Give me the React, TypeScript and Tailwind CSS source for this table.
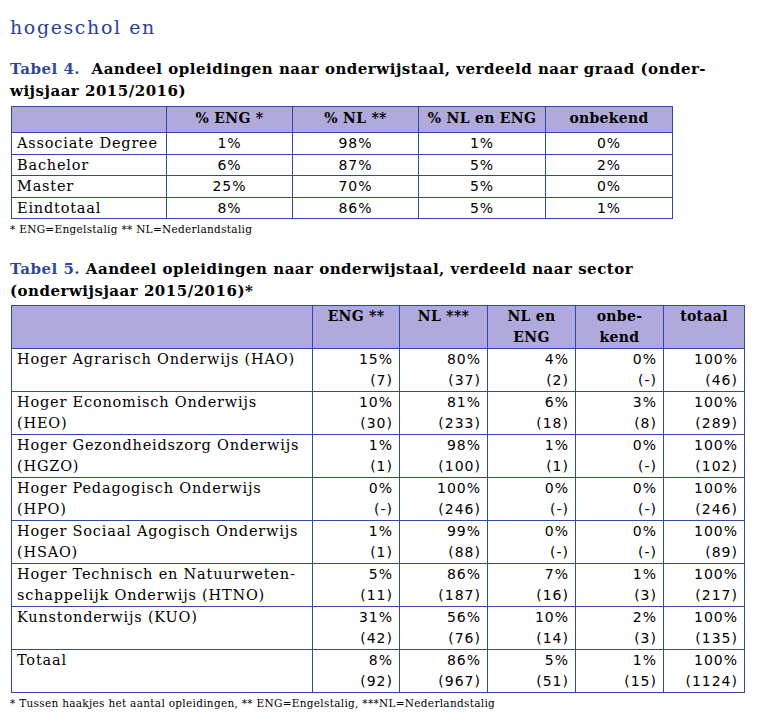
const serif = "font-['DejaVu_Serif',serif]"

const tabel4 = [
  ['Associate Degree', '1%', '98%', '1%', '0%'],
  ['Bachelor', '6%', '87%', '5%', '2%'],
  ['Master', '25%', '70%', '5%', '0%'],
  ['Eindtotaal', '8%', '86%', '5%', '1%'],
]

const tabel5: [string[], string[], string[]][] = [
  [['Hoger Agrarisch Onderwijs (HAO)'], ['15%', '80%', '4%', '0%', '100%'], ['(7)', '(37)', '(2)', '(-)', '(46)']],
  [['Hoger Economisch Onderwijs', '(HEO)'], ['10%', '81%', '6%', '3%', '100%'], ['(30)', '(233)', '(18)', '(8)', '(289)']],
  [['Hoger Gezondheidszorg Onderwijs', '(HGZO)'], ['1%', '98%', '1%', '0%', '100%'], ['(1)', '(100)', '(1)', '(-)', '(102)']],
  [['Hoger Pedagogisch Onderwijs', '(HPO)'], ['0%', '100%', '0%', '0%', '100%'], ['(-)', '(246)', '(-)', '(-)', '(246)']],
  [['Hoger Sociaal Agogisch Onderwijs', '(HSAO)'], ['1%', '99%', '0%', '0%', '100%'], ['(1)', '(88)', '(-)', '(-)', '(89)']],
  [['Hoger Technisch en Natuurweten-', 'schappelijk Onderwijs (HTNO)'], ['5%', '86%', '7%', '1%', '100%'], ['(11)', '(187)', '(16)', '(3)', '(217)']],
  [['Kunstonderwijs (KUO)'], ['31%', '56%', '10%', '2%', '100%'], ['(42)', '(76)', '(14)', '(3)', '(135)']],
  [['Totaal'], ['8%', '86%', '5%', '1%', '100%'], ['(92)', '(967)', '(51)', '(15)', '(1124)']],
]

const cell = 'border border-[#2f48a3] p-0'
const num = "font-['DejaVu_Sans',sans-serif] text-[14px] tracking-[1px] text-black"

export default function App() {
  return (
    <div className={`w-[764px] h-[726px] bg-white text-black ${serif}`}>
      <div className="pl-[10px] pt-[15px] text-[19px] leading-[24px] tracking-[1.6px] text-[#2b3f9a]">hogeschol en</div>

      <div className="pl-[10px] pt-[19px] text-[15px] tracking-[0.5px] font-bold leading-[22px]">
        <span className="text-[#2f46a0]">Tabel 4.</span>&nbsp; Aandeel opleidingen naar onderwijstaal, verdeeld naar graad (onder-
        <br />
        wijsjaar 2015/2016)
      </div>

      <table className="ml-[11px] mt-[4px] border-collapse table-fixed w-[661px]">
        <colgroup>
          <col className="w-[155px]" />
          <col className="w-[126px]" />
          <col className="w-[126px]" />
          <col className="w-[127px]" />
          <col className="w-[127px]" />
        </colgroup>
        <thead>
          <tr className="bg-[#b0a9dc] h-[26px]">
            {['', '% ENG *', '% NL **', '% NL en ENG', 'onbekend'].map((h, i) => (
              <th key={i} className={`${cell} text-center text-[14px] tracking-[0.3px] font-bold leading-[20px] align-top pt-[1px]`}>{h}</th>
            ))}
          </tr>
        </thead>
        <tbody>
          {tabel4.map((r) => (
            <tr key={r[0]} className="h-[21.5px]">
              <td className={`${cell} pl-[5px] text-[14.5px] leading-[20px] tracking-[0.8px]`}>{r[0]}</td>
              {r.slice(1).map((v, i) => (
                <td key={i} className={`${cell} text-center leading-[20px] ${num}`}>{v}</td>
              ))}
            </tr>
          ))}
        </tbody>
      </table>
      <div className="pl-[10px] pt-[3px] text-[10.5px] tracking-[0.3px] leading-[14px]">* ENG=Engelstalig ** NL=Nederlandstalig</div>

      <div className="pl-[10px] pt-[22px] text-[15px] tracking-[0.5px] font-bold leading-[22px]">
        <span className="text-[#2f46a0]">Tabel 5.</span> Aandeel opleidingen naar onderwijstaal, verdeeld naar sector
        <br />
        (onderwijsjaar 2015/2016)*
      </div>

      <table className="ml-[11px] mt-[3px] border-collapse table-fixed w-[733px]">
        <colgroup>
          <col className="w-[301px]" />
          <col className="w-[87px]" />
          <col className="w-[88px]" />
          <col className="w-[88px]" />
          <col className="w-[88px]" />
          <col className="w-[81px]" />
        </colgroup>
        <thead>
          <tr className="bg-[#b0a9dc] h-[42px]">
            {[[''], ['ENG **'], ['NL ***'], ['NL en', 'ENG'], ['onbe-', 'kend'], ['totaal']].map((h, i) => (
              <th key={i} className={`${cell} align-top text-center text-[14px] tracking-[0.3px] font-bold leading-[21px]`}>
                {h.map((l, j) => (
                  <div key={j}>{l}</div>
                ))}
              </th>
            ))}
          </tr>
        </thead>
        <tbody>
          {tabel5.map(([name, pct, cnt]) => (
            <tr key={name[0]} className="h-[42px]">
              <td className={`${cell} align-top pl-[5px] text-[14.5px] leading-[21px] tracking-[0.8px]`}>
                {name.map((l) => (
                  <div key={l}>{l}</div>
                ))}
              </td>
              {pct.map((v, i) => (
                <td key={i} className={`${cell} align-top text-right pr-[6px] leading-[21px] ${num}`}>
                  <div>{v}</div>
                  <div>{cnt[i]}</div>
                </td>
              ))}
            </tr>
          ))}
        </tbody>
      </table>
      <div className="pl-[10px] pt-[3px] text-[10.5px] tracking-[0.3px] leading-[14px]">
        * Tussen haakjes het aantal opleidingen, ** ENG=Engelstalig, ***NL=Nederlandstalig
      </div>
    </div>
  )
}
